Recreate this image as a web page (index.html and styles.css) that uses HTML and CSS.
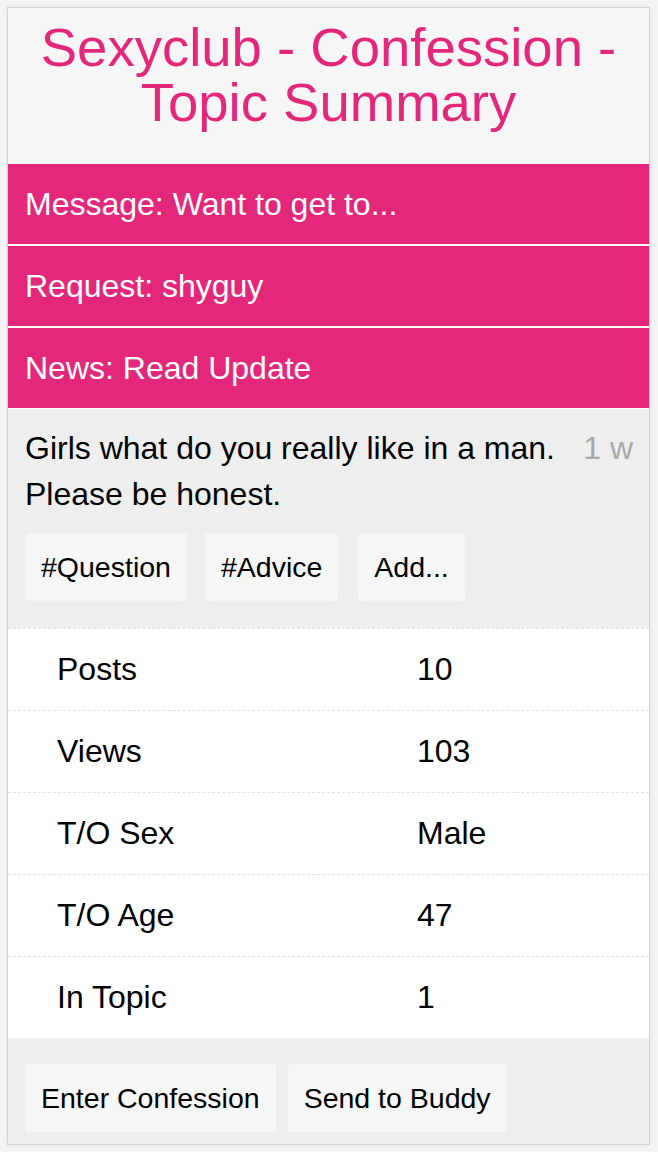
FILE: index.html
```html
<!DOCTYPE html>
<html>
<head>
<meta charset="utf-8">
<link rel="stylesheet" href="styles.css">
</head>
<body>
<div class="card">
  <header class="head"><h1 class="title">Sexyclub - Confession - Topic Summary</h1></header>
  <nav class="bars">
    <div class="bar">Message: Want to get to...</div>
    <div class="bar">Request: shyguy</div>
    <div class="bar">News: Read Update</div>
  </nav>
  <section class="topic">
    <div class="topic-row">
      <p class="topic-text">Girls what do you really like in a man. Please be honest.</p>
      <span class="age">1 w</span>
    </div>
    <div class="tags">
      <span class="btn">#Question</span>
      <span class="btn">#Advice</span>
      <span class="btn">Add...</span>
    </div>
  </section>
  <div class="stats">
    <div class="row"><span class="k">Posts</span><span class="v">10</span></div>
    <div class="row"><span class="k">Views</span><span class="v">103</span></div>
    <div class="row"><span class="k">T/O Sex</span><span class="v">Male</span></div>
    <div class="row"><span class="k">T/O Age</span><span class="v">47</span></div>
    <div class="row"><span class="k">In Topic</span><span class="v">1</span></div>
  </div>
  <footer class="foot">
    <span class="btn">Enter Confession</span>
    <span class="btn">Send to Buddy</span>
  </footer>
</div>
</body>
</html>
```
FILE: styles.css
```css
html, body { margin: 0; padding: 0; }
body {
  background: #f4f4f4;
  font-family: "Liberation Sans", Arial, sans-serif;
  color: #000;
  padding: 7px 8px 7px 7px;
}
.card {
  border: 1px solid #d2d2d2;
  background: #eee;
  box-shadow: 0 0 6px rgba(0,0,0,0.08);
}
.head {
  background: #f6f6f6;
  height: 156px;
  box-sizing: border-box;
  padding-top: 12px;
}
.title {
  margin: 0;
  text-align: center;
  color: #e3287b;
  font-weight: normal;
  font-family: "Liberation Sans", Arial, sans-serif;
  font-size: 54.5px;
  line-height: 55px;
  padding: 0 12px;
}
.bars { display: flex; flex-direction: column; gap: 2px; background: #fff; }
.bar {
  background: #e3287b;
  color: #fff;
  font-size: 32px;
  height: 80px;
  display: flex;
  align-items: center;
  padding-left: 17px;
}
.topic {
  background: #eee;
  padding: 16px 16px 27px 17px;
  border-top: 1px solid #fff;
}
.topic-row { display: flex; justify-content: space-between; }
.topic-text {
  margin: 0;
  font-size: 32px;
  line-height: 46px;
  width: 550px;
}
.age { color: #aaa; font-size: 32px; line-height: 46px; white-space: nowrap; }
.tags { display: flex; gap: 18px; margin-top: 16px; }
.btn {
  background: #f6f6f6;
  border-radius: 4px;
  font-size: 28.5px;
  height: 68px;
  display: inline-flex;
  align-items: center;
  padding: 0 16px;
}
.tags .btn:nth-child(3) { margin-left: 2px; }
.stats { background: #fff; border-top: 1px dashed #e2e2e2; }
.row {
  height: 81px;
  display: flex;
  align-items: center;
  font-size: 32px;
  border-bottom: 1px dashed #e2e2e2;
}
.row:last-child { border-bottom: none; }
.k { width: 360px; padding-left: 49px; }
.foot {
  background: #eee;
  display: flex;
  gap: 12px;
  padding: 26px 17px 12px;
}
```
